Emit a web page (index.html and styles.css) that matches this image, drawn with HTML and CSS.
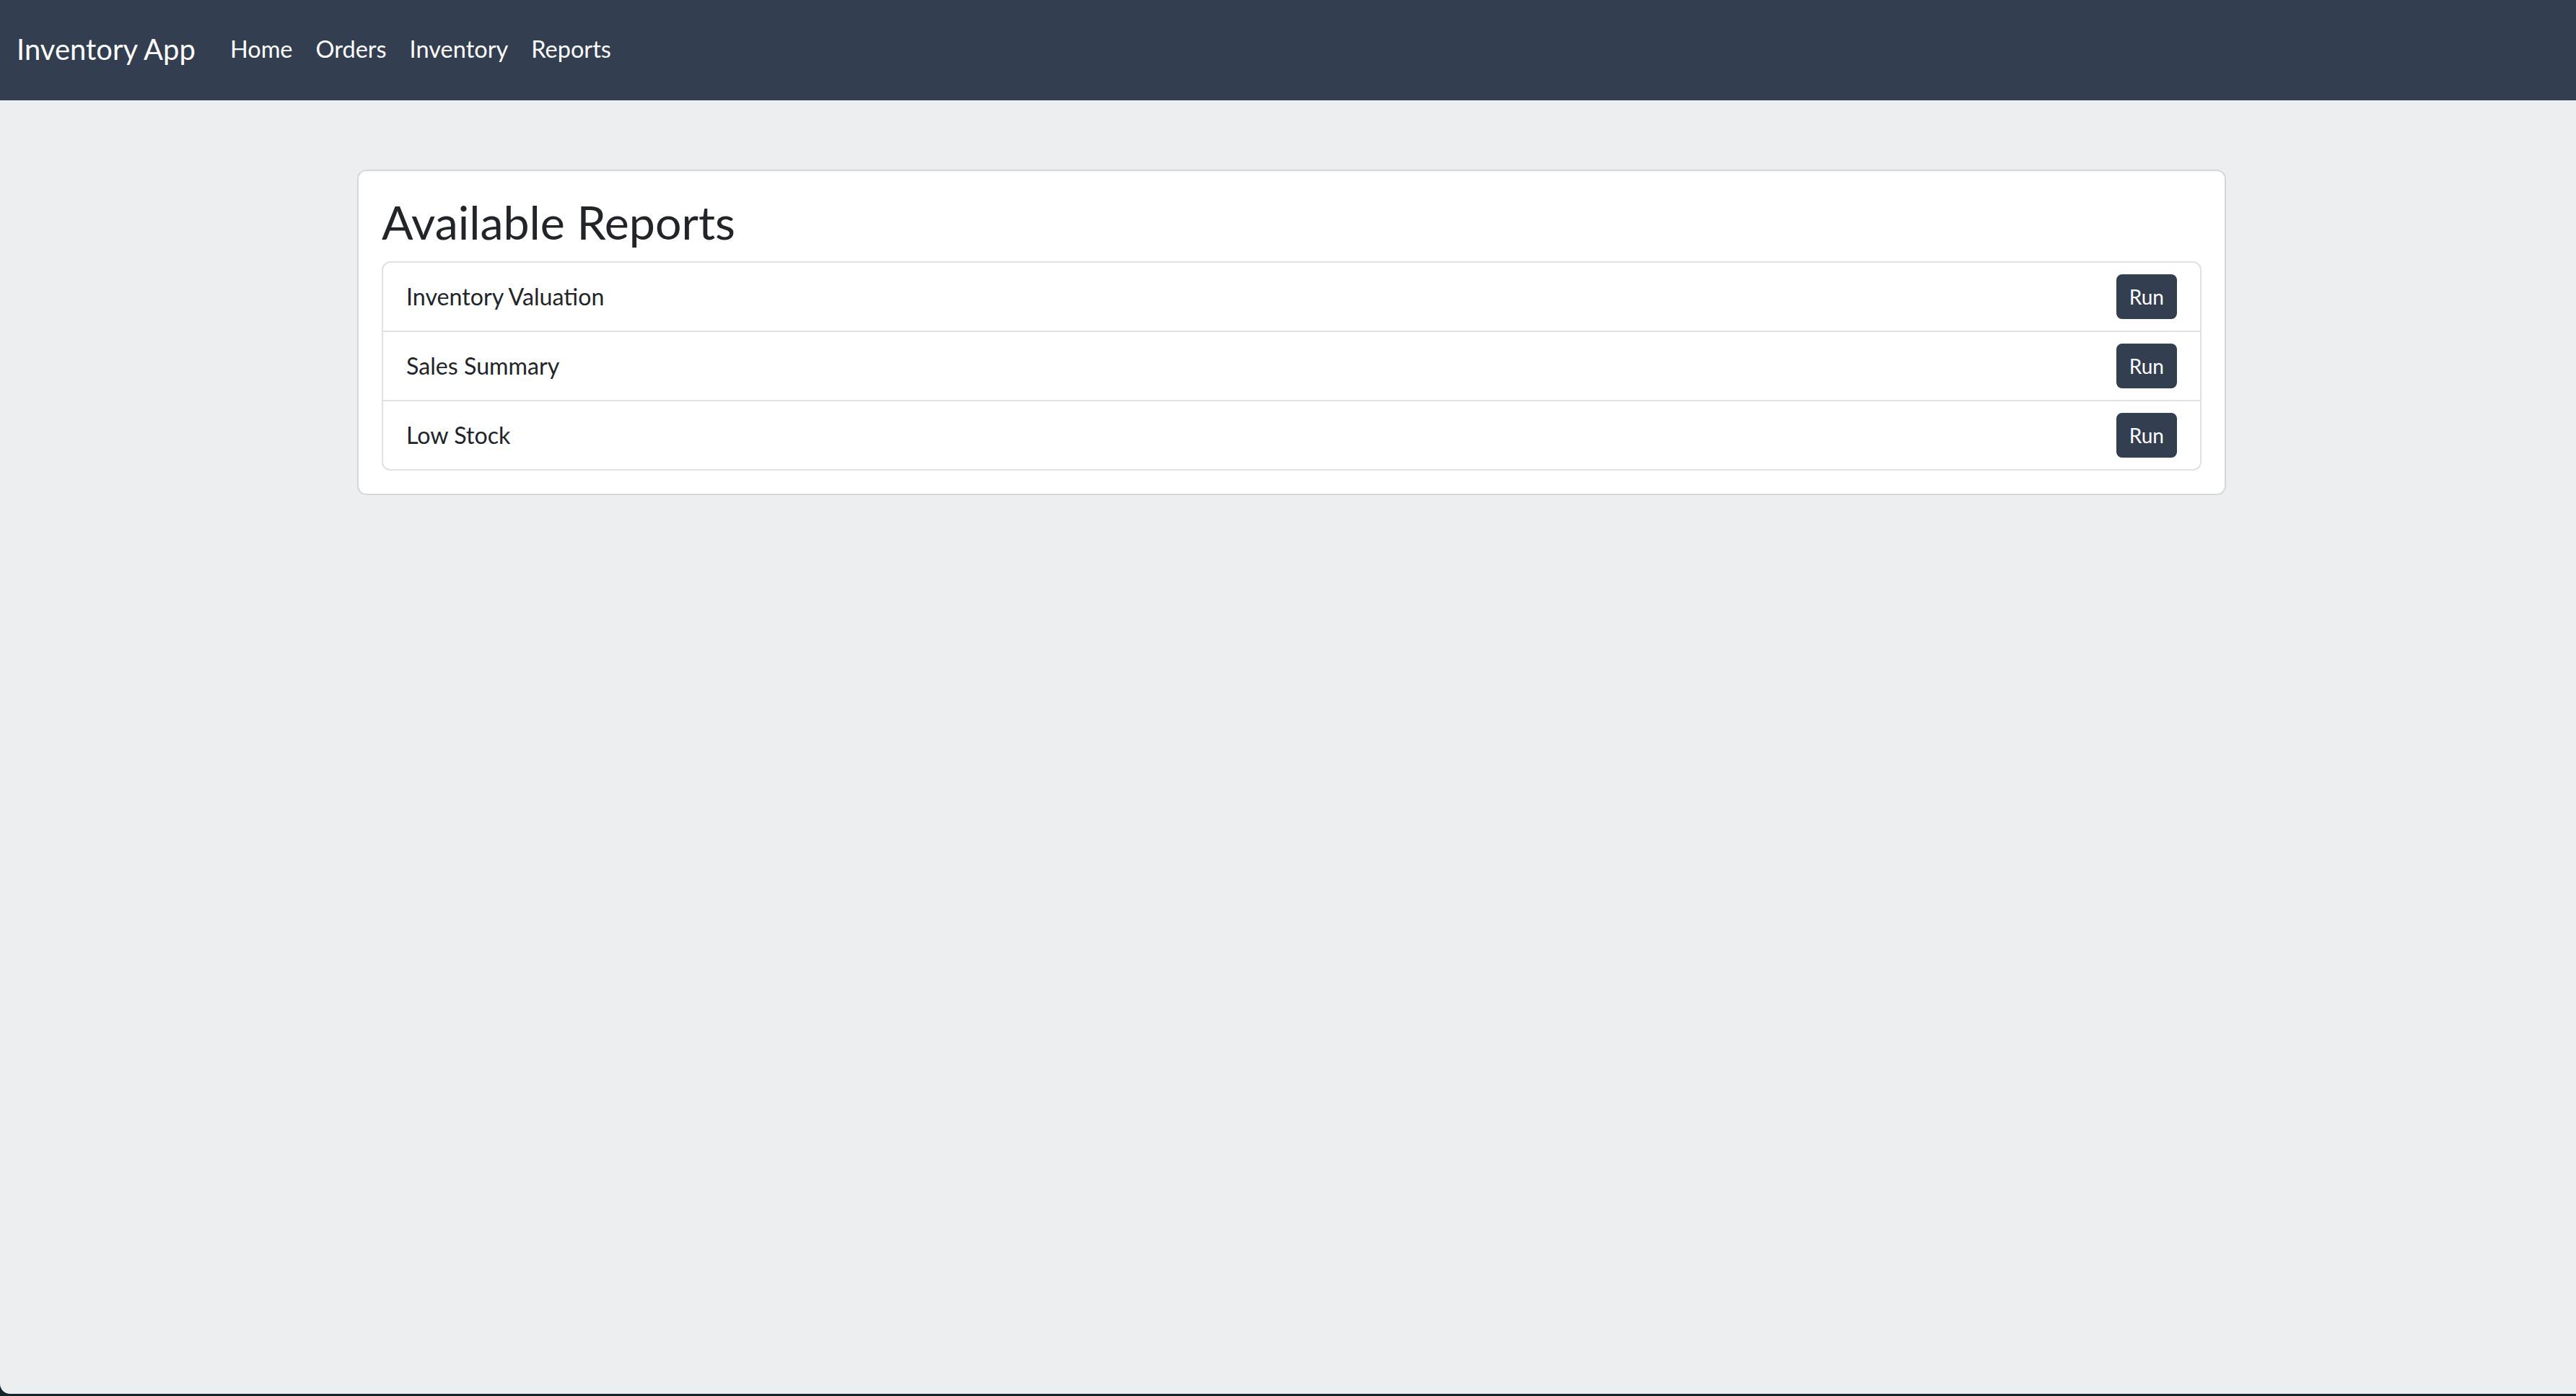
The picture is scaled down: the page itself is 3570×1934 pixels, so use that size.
FILE: index.html
```html
<!DOCTYPE html>
<html lang="en">
<head>
<meta charset="utf-8">
<title>Inventory App - Reports</title>
<link rel="stylesheet" href="styles.css">
</head>
<body>
<div class="page">
  <nav class="navbar">
    <a class="brand" href="#">Inventory App</a>
    <ul class="nav">
      <li><a class="nav-link" href="#">Home</a></li>
      <li><a class="nav-link" href="#">Orders</a></li>
      <li><a class="nav-link" href="#">Inventory</a></li>
      <li><a class="nav-link" href="#">Reports</a></li>
    </ul>
  </nav>
  <main class="container">
    <section class="card">
      <h2 class="card-title">Available Reports</h2>
      <ul class="list-group">
        <li class="list-item"><span>Inventory Valuation</span><button class="btn">Run</button></li>
        <li class="list-item"><span>Sales Summary</span><button class="btn">Run</button></li>
        <li class="list-item"><span>Low Stock</span><button class="btn">Run</button></li>
      </ul>
    </section>
  </main>
</div>
</body>
</html>
```
FILE: styles.css
```css
* { box-sizing: border-box; }
html, body { margin: 0; padding: 0; }
body {
  background: #15232a;
  font-family: Lato, "Open Sans", "Liberation Sans", sans-serif;
  font-size: 32px;
  line-height: 1.5;
  color: #212529;
}
.page {
  height: 1931px;
  background: #ebeff0;
  border-bottom-left-radius: 14px;
  overflow: hidden;
}
.navbar {
  height: 139px;
  background: #333e50;
  display: flex;
  align-items: center;
  padding: 0 0 3px 23px;
}
.brand {
  color: #ffffff;
  text-decoration: none;
  font-size: 40px;
  line-height: 60px;
  margin-right: 32px;
}
.nav {
  list-style: none;
  margin: 0;
  padding: 0;
  display: flex;
}
.nav-link {
  display: block;
  color: #ffffff;
  text-decoration: none;
  font-size: 32.5px;
  line-height: 48px;
  padding: 0 16px;
}
.container {
  width: 2590px;
  margin: 96px 0 0 calc(50% - 1290px);
}
.card {
  background: #ffffff;
  border: 2px solid #d6d7d8;
  border-radius: 13px;
  padding: 32px;
}
.card-title {
  margin: 0 0 16px;
  font-size: 64.5px;
  font-weight: 400;
  line-height: 1.2;
  color: #212529;
}
.list-group {
  list-style: none;
  margin: 0;
  padding: 0;
  border: 2px solid #dee2e6;
  border-radius: 12px;
}
.list-item {
  display: flex;
  align-items: center;
  justify-content: space-between;
  padding: 16px 32px;
  border-top: 2px solid #dee2e6;
  font-size: 32.2px;
}
.list-item:first-child { border-top: none; }
.btn {
  font-family: Lato, "Open Sans", "Liberation Sans", sans-serif;
  font-size: 28px;
  line-height: 42px;
  padding: 8px 16px;
  border: 2px solid #333e50;
  border-radius: 8px;
  background: #333e50;
  color: #ffffff;
  cursor: pointer;
}
```
